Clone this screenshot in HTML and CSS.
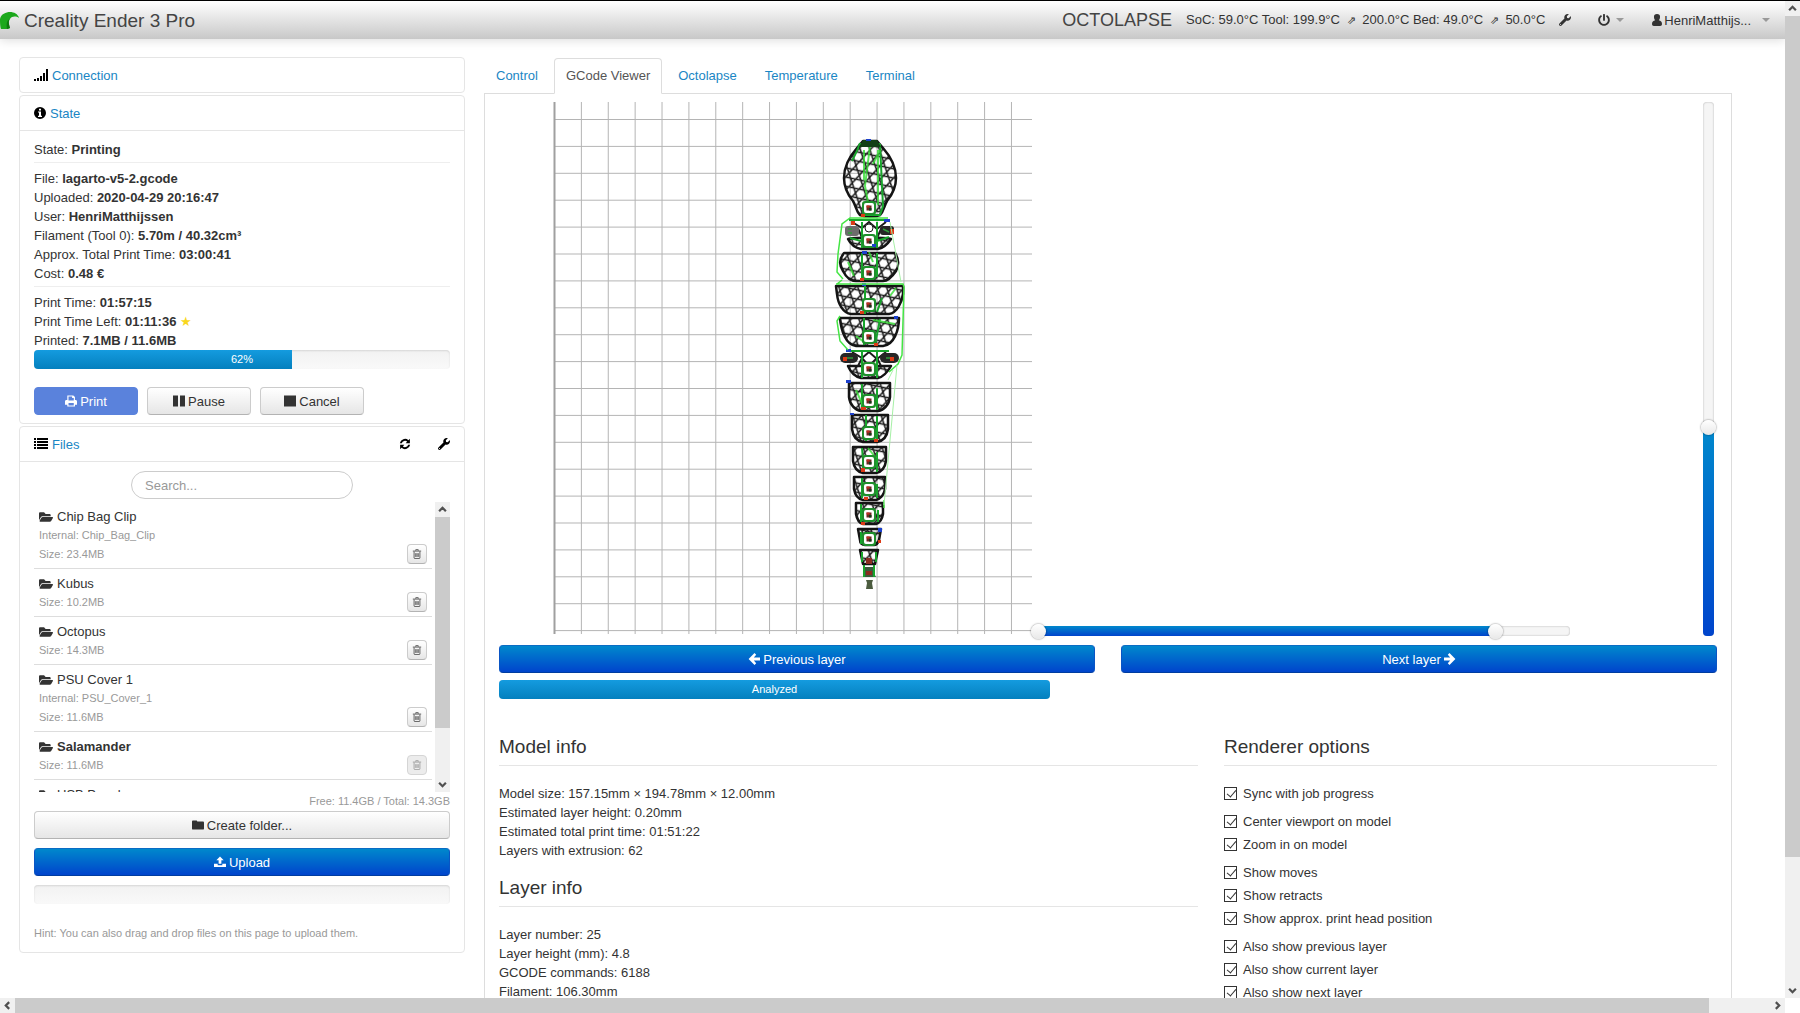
FILE: index.html
```html
<!DOCTYPE html>
<html lang="en">
<head>
<meta charset="utf-8">
<title>Creality Ender 3 Pro</title>
<link rel="stylesheet" href="styles.css">
</head>
<body>
<svg class="defs" aria-hidden="true">
  <symbol id="i-wrench" viewBox="0 0 512 512"><path d="M507.73 109.1c-2.24-9.03-13.54-12.09-20.12-5.51l-74.36 74.36-67.88-11.31-11.31-67.88 74.36-74.36c6.62-6.62 3.43-17.9-5.66-20.16-47.38-11.74-99.55.91-136.58 37.93-39.64 39.64-50.55 97.1-34.05 147.2L18.74 402.76c-24.99 24.99-24.99 65.51 0 90.5 24.99 24.99 65.51 24.99 90.5 0l213.21-213.21c50.12 16.71 107.47 5.68 147.37-34.22 37.07-37.07 49.7-89.32 37.91-136.73zM64 472c-13.25 0-24-10.75-24-24 0-13.26 10.75-24 24-24s24 10.74 24 24c0 13.25-10.75 24-24 24z"/></symbol>
  <symbol id="i-power" viewBox="0 0 512 512"><path d="M400 54.1c63 45 104 118.6 104 201.9 0 136.8-110.8 247.7-247.5 248C120 504.3 8.2 393 8 256.4 7.9 173.1 48.9 99.3 111.8 54.2c11.7-8.3 28-4.8 35 7.7L162.6 90c5.9 10.5 3.1 23.8-6.6 31-41.5 30.8-68 79.6-68 134.9-.1 92.3 74.5 168.1 168 168.1 91.6 0 168.6-74.2 168-169.1-.3-51.8-24.7-101.8-68.1-134-9.7-7.2-12.4-20.5-6.5-30.9l15.8-28.1c7-12.4 23.2-16.1 34.8-7.8zM296 264V24c0-13.3-10.7-24-24-24h-32c-13.3 0-24 10.7-24 24v240c0 13.3 10.7 24 24 24h32c13.3 0 24-10.7 24-24z"/></symbol>
  <symbol id="i-user" viewBox="0 0 12 12"><path d="M6 0a3 3 0 0 1 3 3.300c0 1.300-.6 2.300-1.200 2.900 2 .3 3.200 1.500 3.200 3.800 0 1.300-.7 2-1.800 2H2.800C1.700 12 1 11.300 1 10c0-2.300 1.200-3.500 3.200-3.800C3.600 5.600 3 4.600 3 3.300A3 3 0 0 1 6 0z"/></symbol>
  <symbol id="i-signal" viewBox="0 0 14 12"><path d="M0 10h2v2H0zM3 9h2v3H3zM6 7h2v5H6zM9 4h2v8H9zM12 0h2v12h-2z"/></symbol>
  <symbol id="i-info" viewBox="0 0 12 12"><path fill-rule="evenodd" d="M6 0a6 6 0 1 1 0 12A6 6 0 0 1 6 0zM5 1.800v1.800h2V1.800zM4 4.600v1h1v3.200H4v1.100h4V8.800H7V4.600z"/></symbol>
  <symbol id="i-list" viewBox="0 0 14 12"><path d="M0 0h2v2H0zM3 0h11v2H3zM0 3h2v2H0zM3 3h11v2H3zM0 6h2v2H0zM3 6h11v2H3zM0 9h2v2H0zM3 9h11v2H3z"/></symbol>
  <symbol id="i-sync" viewBox="0 0 14 14"><path d="M1 6A6 6 0 0 1 11 2.600L12.700 1v5H7.800l1.700-1.800A3.900 3.900 0 0 0 3.300 6zM13 8A6 6 0 0 1 3 11.400L1.300 13V8h4.900L4.500 9.800A3.900 3.900 0 0 0 10.700 8z"/></symbol>
  <symbol id="i-open" viewBox="0 32 576 448"><path d="M572.694 292.093L500.27 416.248A63.997 63.997 0 0 1 444.989 448H45.025c-18.523 0-30.064-20.093-20.731-36.093l72.424-124.155A64 64 0 0 1 152 256h399.964c18.523 0 30.064 20.093 20.73 36.093zM152 224h328v-48c0-26.510-21.490-48-48-48H272l-64-64H48C21.490 64 0 85.490 0 112v278.046l69.077-118.418C86.214 242.250 117.989 224 152 224z"/></symbol>
  <symbol id="i-folder" viewBox="0 0 13 12"><path d="M0 2.200C0 1.500.5 1 1.200 1h3.300c.7 0 1.200.5 1.200 1.200h6c.8 0 1.300.5 1.300 1.300V9.700c0 .8-.5 1.300-1.300 1.300H1.300C.5 11 0 10.500 0 9.700z"/></symbol>
  <symbol id="i-trash" viewBox="0 0 12 12"><path fill="none" stroke="currentColor" d="M1 2.500h10M4.500 2V.8h3V2M2.500 3v7.500c0 .6.400 1 1 1h5c.6 0 1-.4 1-1V3M4.500 5v4.500M6 5v4.500M7.500 5v4.500"/></symbol>
  <symbol id="i-print" viewBox="0 0 13 12"><path fill-rule="evenodd" d="M2.500 0H9l1.800 1.800V5h.6c.9 0 1.600.7 1.600 1.500V10h-2.200v2H2.500v-2H0V6.500C0 5.700.7 5 1.600 5h.9zM3.800 1.200v4.300h5.700V2.800H7.700V1.200zM3.800 8.300v2.500h5.700V8.300z"/></symbol>
  <symbol id="i-pause" viewBox="0 0 12 12"><path d="M0 .5h5v11H0zM7 .5h5v11H7z"/></symbol>
  <symbol id="i-stop" viewBox="0 0 12 12"><path d="M0 .5h12v11H0z"/></symbol>
  <symbol id="i-upload" viewBox="0 0 13 12"><path d="M6.500 0l4 4.200H8V8H5V4.200H2.500zM0 8h4v1.500h5V8h4v3.500H0z"/></symbol>
  <symbol id="i-left" viewBox="0 0 12 12"><path d="M6.500 0L8.200 1.700 5.800 4.500H12v3H5.800l2.400 2.800L6.500 12 .6 6z"/></symbol>
  <symbol id="i-right" viewBox="0 0 12 12"><path d="M5.500 0L3.800 1.700l2.400 2.800H0v3h6.200l-2.400 2.800L5.500 12l5.900-6z"/></symbol>
  <symbol id="i-up" viewBox="0 0 8 8"><path fill="none" stroke="#505050" stroke-width="2" d="M1 5.500L4 2.500l3 3"/></symbol>
</svg>

<div class="window">
  <div class="view">
    <header class="navbar">
      <a class="brand" href="#">
        <svg class="logo" viewBox="0 0 19 17" aria-hidden="true"><path fill="#1ca81c" d="M1 17C0 14 0 9 0 7 1 2 6 0 10 0c4 0 8 2 9 6-3-2-7-2-9 1-2 2-1 6 0 9-3 2-6 1-9 1z"/><path fill="#0f7a0f" d="M10 7c-2 2-1 6 0 9l-3 1C6 12 7 8 10 7z"/></svg>
        Creality Ender 3 Pro
      </a>
      <nav class="tools">
        <a class="octolapse" href="#">OCTOLAPSE</a>
        <span class="temps">SoC: 59.0°C Tool: 199.9°C <small>⇗</small> 200.0°C Bed: 49.0°C <small>⇗</small> 50.0°C</span>
        <a class="settings" href="#" aria-label="Settings"><svg class="icon"><use href="#i-wrench"/></svg></a>
        <a class="power" href="#" aria-label="System"><svg class="icon"><use href="#i-power"/></svg><i class="caret"></i></a>
        <a class="user" href="#"><svg class="icon"><use href="#i-user"/></svg><span>HenriMatthijs...</span><i class="caret"></i></a>
      </nav>
    </header>

    <div class="page">
      <aside class="sidebar">
        <section class="panel">
          <h2 class="panel-head"><svg class="icon wide"><use href="#i-signal"/></svg><a href="#">Connection</a></h2>
        </section>

        <section class="panel">
          <h2 class="panel-head"><svg class="icon"><use href="#i-info"/></svg><a href="#">State</a></h2>
          <div class="panel-body state">
            <p>State: <strong>Printing</strong></p>
            <hr>
            <p>File: <strong>lagarto-v5-2.gcode</strong></p>
            <p>Uploaded: <strong>2020-04-29 20:16:47</strong></p>
            <p>User: <strong>HenriMatthijssen</strong></p>
            <p>Filament (Tool 0): <strong>5.70m / 40.32cm³</strong></p>
            <p>Approx. Total Print Time: <strong>03:00:41</strong></p>
            <p>Cost: <strong>0.48 €</strong></p>
            <hr>
            <p>Print Time: <strong>01:57:15</strong></p>
            <p>Print Time Left: <strong>01:11:36</strong> <span class="star">★</span></p>
            <p>Printed: <strong>7.1MB / 11.6MB</strong></p>
            <div class="progress"><div class="bar" style="width:62%"></div><span class="progress-text">62%</span></div>
            <div class="job-buttons">
              <button class="btn primary" disabled><svg class="icon"><use href="#i-print"/></svg>Print</button>
              <button class="btn"><svg class="icon"><use href="#i-pause"/></svg>Pause</button>
              <button class="btn"><svg class="icon"><use href="#i-stop"/></svg>Cancel</button>
            </div>
          </div>
        </section>

        <section class="panel">
          <h2 class="panel-head"><svg class="icon wide"><use href="#i-list"/></svg><a href="#">Files</a>
            <span class="head-actions">
              <button class="bare" aria-label="Refresh"><svg class="icon"><use href="#i-sync"/></svg></button>
              <button class="bare" aria-label="File list settings"><svg class="icon"><use href="#i-wrench"/></svg></button>
            </span>
          </h2>
          <div class="panel-body files">
            <input class="search" type="text" placeholder="Search..." aria-label="Search">
            <div class="file-box">
              <ul class="file-list">
                <li><div><b class="name"><svg class="icon wide"><use href="#i-open"/></svg>Chip Bag Clip</b><small>Internal: Chip_Bag_Clip</small><small>Size: 23.4MB</small></div><button class="btn mini" aria-label="Delete"><svg class="icon"><use href="#i-trash"/></svg></button></li>
                <li><div><b class="name"><svg class="icon wide"><use href="#i-open"/></svg>Kubus</b><small>Size: 10.2MB</small></div><button class="btn mini" aria-label="Delete"><svg class="icon"><use href="#i-trash"/></svg></button></li>
                <li><div><b class="name"><svg class="icon wide"><use href="#i-open"/></svg>Octopus</b><small>Size: 14.3MB</small></div><button class="btn mini" aria-label="Delete"><svg class="icon"><use href="#i-trash"/></svg></button></li>
                <li><div><b class="name"><svg class="icon wide"><use href="#i-open"/></svg>PSU Cover 1</b><small>Internal: PSU_Cover_1</small><small>Size: 11.6MB</small></div><button class="btn mini" aria-label="Delete"><svg class="icon"><use href="#i-trash"/></svg></button></li>
                <li><div><b class="name current"><svg class="icon wide"><use href="#i-open"/></svg>Salamander</b><small>Size: 11.6MB</small></div><button class="btn mini" aria-label="Delete" disabled><svg class="icon"><use href="#i-trash"/></svg></button></li>
                <li><div><b class="name"><svg class="icon wide"><use href="#i-open"/></svg>USB Panel</b></div></li>
              </ul>
              <div class="scroll vertical" aria-hidden="true"><svg class="arrow"><use href="#i-up"/></svg><div class="rail"><div class="thumb list-thumb"></div></div><svg class="arrow down"><use href="#i-up"/></svg></div>
            </div>
            <p class="free">Free: 11.4GB / Total: 14.3GB</p>
            <button class="btn block"><svg class="icon"><use href="#i-folder"/></svg>Create folder...</button>
            <button class="btn primary block"><svg class="icon"><use href="#i-upload"/></svg>Upload</button>
            <div class="progress"></div>
            <p class="hint">Hint: You can also drag and drop files on this page to upload them.</p>
          </div>
        </section>
      </aside>

      <main class="main">
        <nav class="tabs">
          <a href="#">Control</a><a class="active" href="#">GCode Viewer</a><a href="#">Octolapse</a><a href="#">Temperature</a><a href="#">Terminal</a>
        </nav>
        <div class="tab-content">
          <div class="viewer">
            <svg class="canvas" viewBox="498 102 534 534" role="img" aria-label="GCode layer">
              <defs>
                <pattern id="bed" x="553" y="119" width="26.880" height="26.900" patternUnits="userSpaceOnUse"><path d="M0 .5h27M.5 0v27" fill="none" stroke="#b4b4b4"/></pattern>
                <pattern id="infill" width="10.500" height="18" patternUnits="userSpaceOnUse" patternTransform="translate(870 150) rotate(12)"><path d="M0 4.500h10.500M0 13.500h10.500M0 0l10.500 18M10.500 0L0 18" fill="none" stroke="#1c1c1c" stroke-width="1.500"/></pattern>
                <g id="peg"><rect x="-7" y="-7" width="14" height="14" rx="3" fill="#1f8f2c"/><rect x="-5" y="-5" width="10" height="10" rx="2" fill="#fff"/><rect x="-2.500" y="-2.500" width="5" height="5" fill="#6b2a22"/><path d="M-2.500-2.500h3v2h-3z" fill="#c03020"/><path d="M0 0h2.500v2.500H0z" fill="#123c1c"/></g>
              </defs>
              <path fill="url(#bed)" d="M553 102h478v532H553z"/>
              <path d="M553.500 102v532" stroke="#a0a0a0" stroke-width="2"/>
              <g transform="translate(-1 0)">
              <g fill="url(#infill)" stroke="#141414" stroke-width="2.500" stroke-linejoin="round">
                <path d="M863 141h14l6 7c8 9 13 19 13 30 0 9-4 17-9 23-3 5-3 10-7 14-5 2-15 2-20 0-4-4-4-9-7-14-5-6-9-14-9-23 0-11 5-21 13-30z"/>
                <path d="M848 239c8-2 36-2 43 0-4 6-8 9-13 10h-17c-5-1-10-4-13-10z"/>
                <path d="M844 253h51c4 6 4 13 1 18-4 6-8 10-13 10h-27c-6 0-10-4-13-10-4-6-4-12 1-18z"/>
                <path d="M836 286h67v8c-1 8-6 19-14 20h-38c-8-1-13-10-14-20z"/>
                <path d="M840 318h59c0 12-5 27-16 28h-27c-10-1-15-15-16-28z"/>
                <path d="M848 366h43c-4 7-8 11-13 12h-17c-5-1-10-5-13-12z"/>
                <path d="M849 383h41v14c-1 8-6 13-12 14h-17c-6-1-11-6-12-14z"/>
                <path d="M852 415h36v14c-1 8-5 12-11 13h-14c-6-1-10-5-11-13z"/>
                <path d="M853 447h33v14c-1 7-5 11-10 12h-13c-5-1-9-5-10-12z"/>
                <path d="M854 477h31v12c-1 6-5 10-9 11h-13c-5-1-8-5-9-11z"/>
                <path d="M856 503h27v11c-1 6-4 9-7 10h-13c-4-1-6-4-7-10z"/>
                <path d="M858 529h23l-2 11c-1 3-3 5-5 5h-9c-3 0-5-2-5-5z"/>
                <path d="M860 550h18l-3 14h-12z"/>
              </g>
              <path d="M852 222l10 6 7-6 8 7 9-7M862 238l-4-10M877 238l4-9M852 352l10 6 7-6 8 7 9-7M858 366l4-8 7 8 8-8 4 8" fill="none" stroke="#1c1c1c" stroke-width="2"/>
              <path d="M863 567h12l-2 4 3 6h-13l2-5z" fill="#3c5a3c"/>
              <path d="M866 580h7l-1 3 1 6h-7l1-6z" fill="#4c5c40"/>
              <g fill="none" stroke="#18a52c" stroke-width="2">
                <path d="M860 143c-3 9-6 14-8 18M860 144h20M880 144l3 62-3 9h-18M849 220h39M862 222v26M877 222v26M850 238l11 3M877 241l12-4M862 253v27M877 253v24M865 285v29M882 298l-5 14M864 318v27M880 319l-5 26M848 351h41M862 352v26M877 352v26M862 384v25M877 388v22M866 415v26M877 416v24M862 448l2 24M877 452v20M862 478v20M877 484v14M861 504v18M878 510v12M861 532v12M862 552v10M876 552v10M864 565v12M874 565v12"/>
              </g>
              <path d="M864 150v30M870 146l-5 40 4 22M878 150v55M873 262l-4-10M873 320l22 4M880 150l-7 14M856 390l8 18M868 448l8 10M848 262l6 14M890 296l6-8M856 336l8 6" fill="none" stroke="#35dc35" stroke-width="2" opacity=".8"/>
              <path d="M863 140h14l4 7h-22z" fill="#123f16"/>
              <g fill="#262626"><rect x="845" y="226" width="14" height="10" rx="3" fill="#6c6c6c"/><rect x="880" y="226" width="14" height="9" rx="3"/><rect x="840" y="353" width="18" height="10" rx="5"/><rect x="880" y="353" width="19" height="10" rx="5"/></g>
              <path d="M848 229h4M848 233h4M883 229l6 3M846 358h7M886 358h7" stroke="#2f9c3a" stroke-width="1.500"/>
              <g>
                <use href="#peg" x="869" y="208"/><use href="#peg" x="869" y="241"/><use href="#peg" x="869" y="273"/><use href="#peg" x="869" y="305"/><use href="#peg" x="869" y="337"/><use href="#peg" x="869" y="369"/><use href="#peg" x="869" y="401"/><use href="#peg" x="869" y="433"/><use href="#peg" x="869" y="462"/><use href="#peg" x="869" y="489"/><use href="#peg" x="869" y="515"/><use href="#peg" x="869" y="539"/>
              </g>
              <circle cx="869" cy="228" r="4" fill="#fff" stroke="#1c1c1c"/>
              <path d="M866 558h6v6h-6zM866 571h6v4h-6z" fill="#8a2d20"/>
              <path d="M861 214h4v3h-4zM851 221h4v4h-4zM890 229h4v5h-4zM860 278h4v3h-4zM860 311h4v3h-4zM874 343h4v3h-4zM843 357h4v4h-4zM890 357h4v4h-4zM861 407h5v3h-5zM874 439h4v3h-4zM861 468h4v4h-4zM864 497h4v3h-4zM861 522h4v3h-4zM878 540h3v3h-3z" fill="#dc3a16"/>
              <path d="M866 139h5v2h-5zM884 219h6v3h-6zM872 244h4v3h-4zM862 251h5v3h-5zM862 283h4v3h-4zM894 316h4v3h-4zM846 349h5v3h-5zM846 380h5v3h-5zM850 413h4v2h-4zM878 528h4v4h-4z" fill="#1c40cc"/>
              <path d="M888 218h-38l-8 6-4 30-1 18 6 7M836 284h67l1 3-2 68-4 9-9 8M842 280l-5 4M840 316l-3 5 3 20 8 9M884 500v8" fill="none" stroke="#44e544" stroke-width="1.500"/>
              <path d="M897 365l-13 140M890 222l11 60M893 370l-5 10" fill="none" stroke="#a6f0a6"/>
              </g>
            </svg>
            <div class="command-slider">
              <div class="fill" style="left:0;width:86%"></div>
              <input type="range" min="0" max="100" value="0" aria-label="First command">
              <input type="range" min="0" max="100" value="86" aria-label="Last command">
            </div>
            <div class="layer-slider">
              <div class="fill" style="height:39%"></div>
              <input type="range" min="0" max="100" value="39" aria-label="Layer">
            </div>
          </div>
          <div class="layer-buttons">
            <button class="btn primary"><svg class="icon"><use href="#i-left"/></svg>Previous layer</button>
            <button class="btn primary">Next layer<svg class="icon"><use href="#i-right"/></svg></button>
          </div>
          <div class="progress analyzed"><div class="bar" style="width:100%"></div><span class="progress-text">Analyzed</span></div>

          <div class="details">
            <div>
              <h3>Model info</h3>
              <p>Model size: 157.15mm × 194.78mm × 12.00mm</p>
              <p>Estimated layer height: 0.20mm</p>
              <p>Estimated total print time: 01:51:22</p>
              <p>Layers with extrusion: 62</p>
              <h3 class="next">Layer info</h3>
              <p>Layer number: 25</p>
              <p>Layer height (mm): 4.8</p>
              <p>GCODE commands: 6188</p>
              <p>Filament: 106.30mm</p>
            </div>
            <div>
              <h3>Renderer options</h3>
              <div class="options">
                <div class="group">
                  <label><input type="checkbox" checked>Sync with job progress</label>
                </div>
                <div class="group">
                  <label><input type="checkbox" checked>Center viewport on model</label>
                  <label><input type="checkbox" checked>Zoom in on model</label>
                </div>
                <div class="group">
                  <label><input type="checkbox" checked>Show moves</label>
                  <label><input type="checkbox" checked>Show retracts</label>
                  <label><input type="checkbox" checked>Show approx. print head position</label>
                </div>
                <div class="group">
                  <label><input type="checkbox" checked>Also show previous layer</label>
                  <label><input type="checkbox" checked>Also show current layer</label>
                  <label><input type="checkbox" checked>Also show next layer</label>
                </div>
              </div>
            </div>
          </div>
        </div>
      </main>
    </div>
  </div>
  <div class="scroll vertical" aria-hidden="true"><svg class="arrow"><use href="#i-up"/></svg><div class="rail"><div class="thumb page-thumb"></div></div><svg class="arrow down"><use href="#i-up"/></svg></div>
  <div class="scroll horizontal" aria-hidden="true"><svg class="arrow left"><use href="#i-up"/></svg><div class="rail"><div class="thumb wide-thumb"></div></div><svg class="arrow right"><use href="#i-up"/></svg></div>
</div>
</body>
</html>
```
FILE: styles.css
```css
* { box-sizing: border-box; }
body {
  margin: 0;
  color: #333;
  background: #fff;
  font: 13px/19px "Liberation Sans", Arial, sans-serif;
}
p, h2, h3, ul { margin: 0; padding: 0; font-weight: normal; }
a { color: #1a86c4; text-decoration: none; }
button, input { font: inherit; color: inherit; }
.defs { position: absolute; width: 0; height: 0; }
.icon { width: 12px; height: 12px; flex: none; fill: currentColor; }
.icon.wide { width: 14px; }

/* window frame */
.window {
  display: grid;
  grid-template: minmax(0, 1fr) 15px / minmax(0, 1fr) 15px;
  height: 100vh;
  overflow: hidden;
  border-top: 1px solid #000;
}
.view { overflow: hidden; }
.scroll { display: flex; background: #f0f0f0; }
.scroll.vertical { flex-direction: column; width: 15px; }
.rail { flex: 1; }
.thumb { background: #cbcbcb; }
.vertical .thumb { width: 100%; }
.horizontal .thumb { height: 100%; }
.page-thumb { height: 87%; }
.list-thumb { height: 81%; }
.wide-thumb { width: 96.5%; }
.arrow { flex: none; width: 15px; height: 15px; padding: 3px; }
.arrow.down { transform: rotate(180deg); }
.arrow.left { transform: rotate(-90deg); }
.arrow.right { transform: rotate(90deg); }

/* top bar */
.navbar {
  display: flex;
  align-items: center;
  justify-content: space-between;
  height: 38px;
  background: linear-gradient(#fff, #c8c8c8);
  box-shadow: 0 1px 10px rgba(0, 0, 0, .15);
}
.navbar a { display: flex; align-items: center; color: #333; }
.navbar .brand { gap: 5px; color: #444; font-size: 19px; }
.logo { width: 19px; height: 17px; }
.tools { display: flex; align-items: center; padding-right: 15px; }
.navbar .octolapse { margin-right: 14px; font-size: 18px; color: #444; }
.temps small { margin: 0 3px; font-size: 11px; }
.settings { margin-left: 14px; }
.navbar .power { margin-left: 27px; gap: 6px; }
.navbar .user { margin-left: 27px; gap: 1px; }
.user .caret { margin-left: 10px; }
.caret { border: 4px solid transparent; border-top-color: #999; border-bottom: 0; }

/* page columns */
.page { display: flex; gap: 19px; padding: 18px 53px 0 19px; }
.sidebar { flex: 0 0 446px; }
.main { flex: 1; min-width: 0; padding-top: 1px; }

/* side panels */
.panel { margin-bottom: 2px; border: 1px solid #e5e5e5; border-radius: 4px; }
.panel-head {
  display: flex;
  align-items: center;
  gap: 4px;
  height: 34px;
  padding: 0 14px;
  color: #000;
  font-size: 13px;
}
.panel-body { padding: 9px 14px 8px; border-top: 1px solid #e5e5e5; }
.head-actions { display: flex; gap: 27px; margin-left: auto; }
.bare { display: flex; padding: 0; border: 0; background: none; }
.state hr { margin: 3px 0 6px; border: 0; border-top: 1px solid #eee; }
.star { color: #f9d71c; font-size: 13px; line-height: 1; }

.progress {
  position: relative;
  height: 19px;
  overflow: hidden;
  border-radius: 4px;
  background: linear-gradient(#f2f2f2, #f9f9f9);
  box-shadow: inset 0 1px 2px rgba(0, 0, 0, .12);
}
.bar { height: 100%; background: linear-gradient(#149bdf, #0480be); }
.progress-text {
  position: absolute;
  inset: 0;
  color: #fff;
  font-size: 11px;
  text-align: center;
}

.btn {
  display: flex;
  align-items: center;
  justify-content: center;
  gap: 3px;
  height: 28px;
  padding: 0;
  border: 1px solid #ccc;
  border-bottom-color: #b3b3b3;
  border-radius: 4px;
  background: linear-gradient(#fff, #e6e6e6);
}
.btn.primary {
  border-color: #0a6cc4 #0a55c4 #003da0;
  color: #fff;
  background: linear-gradient(#0088cc, #0044cc);
}
.btn.primary:disabled { border-color: #5a82dc; background: #5a82dc; }
.block { width: 100%; margin-bottom: 9px; }
.job-buttons { display: grid; grid-template-columns: repeat(3, 104px); gap: 9px; margin-top: 18px; }

/* file list */
.search {
  display: block;
  width: 222px;
  height: 28px;
  margin: 0 auto 3px;
  padding: 0 13px;
  border: 1px solid #ccc;
  border-radius: 14px;
}
.search::placeholder { color: #999; }
.file-box { display: flex; gap: 3px; height: 290px; overflow: hidden; }
.file-list { flex: 1; list-style: none; }
.file-list li {
  display: flex;
  align-items: flex-end;
  justify-content: space-between;
  padding: 5px 5px 4px;
  border-bottom: 1px solid #ddd;
}
.name { display: flex; align-items: center; gap: 4px; font-weight: normal; }
.current { font-weight: bold; }
.file-list small { display: block; color: #999; font-size: 11px; }
.btn.mini { width: 20px; height: 20px; color: #444; }
.mini .icon { width: 10px; height: 10px; }
.btn.mini:disabled { border-color: #d5d5d5; color: #999; background: #ececec; }
.free { color: #999; font-size: 11px; text-align: right; }
.hint { margin: 20px 0 1px; color: #999; font-size: 11px; }

/* tabs */
.tabs { display: flex; border-bottom: 1px solid #ddd; }
.tabs a {
  height: 36px;
  margin: 0 4px -1px 0;
  padding: 7px 11px;
  border: 1px solid transparent;
  border-radius: 4px 4px 0 0;
}
.tabs .active { border-color: #ddd #ddd #fff; color: #555; background: #fff; }
.tab-content { padding: 8px 14px 0; border: 1px solid #ddd; border-width: 0 1px; }

/* layer viewer */
.viewer { display: flex; align-items: flex-end; }
.canvas { flex: none; width: 534px; height: 534px; }
.command-slider {
  position: relative;
  flex: none;
  width: 532px;
  height: 10px;
  margin-left: 5px;
}
.layer-slider { position: relative; width: 11px; height: 534px; margin: 0 3px 0 auto; }
.command-slider, .layer-slider {
  border-radius: 4px;
  background: #f5f5f5;
  box-shadow: inset 0 0 2px rgba(0, 0, 0, .3);
}
.fill { position: absolute; bottom: 0; background: linear-gradient(#0088cc, #0044cc); border-radius: 4px; }
.command-slider .fill { top: 0; }
.layer-slider .fill { left: 0; right: 0; }
.viewer input {
  position: absolute;
  margin: 0;
  appearance: none;
  background: none;
  pointer-events: none;
}
.command-slider input { inset: -3px -7px; width: calc(100% + 14px); height: 16px; }
.layer-slider input {
  inset: -7px -2px;
  width: 15px;
  height: calc(100% + 14px);
  writing-mode: vertical-lr;
  direction: rtl;
}
.viewer input::-webkit-slider-thumb {
  width: 15px;
  height: 15px;
  appearance: none;
  border-radius: 50%;
  background: linear-gradient(#fff, #e8e8e8);
  box-shadow: 0 0 2px rgba(0, 0, 0, .6);
  pointer-events: auto;
}
.layer-buttons { display: grid; grid-template-columns: 1fr 1fr; gap: 26px; margin: 9px 0 7px; }
.analyzed { width: 551px; }

/* layer details */
.details {
  display: grid;
  grid-template-columns: minmax(0, 1fr) 493px;
  gap: 26px;
  padding-top: 36px;
}
h3 {
  margin-bottom: 18px;
  padding-bottom: 6px;
  border-bottom: 1px solid #e5e5e5;
  font-size: 19px;
  line-height: 24px;
}
h3.next { margin-top: 16px; }
.options, .group { display: grid; }
.options { gap: 9px; }
.group { gap: 4px; }
.group label { display: flex; align-items: center; gap: 6px; }
.group input {
  width: 13px;
  height: 13px;
  margin: 0;
  appearance: none;
  border: 1px solid #333;
  background: #fff;
}
.group input:checked::before {
  display: block;
  width: 4px;
  height: 8px;
  margin: 0 0 0 4px;
  border: solid #333;
  border-width: 0 1px 1px 0;
  content: "";
  transform: rotate(40deg);
}
```
